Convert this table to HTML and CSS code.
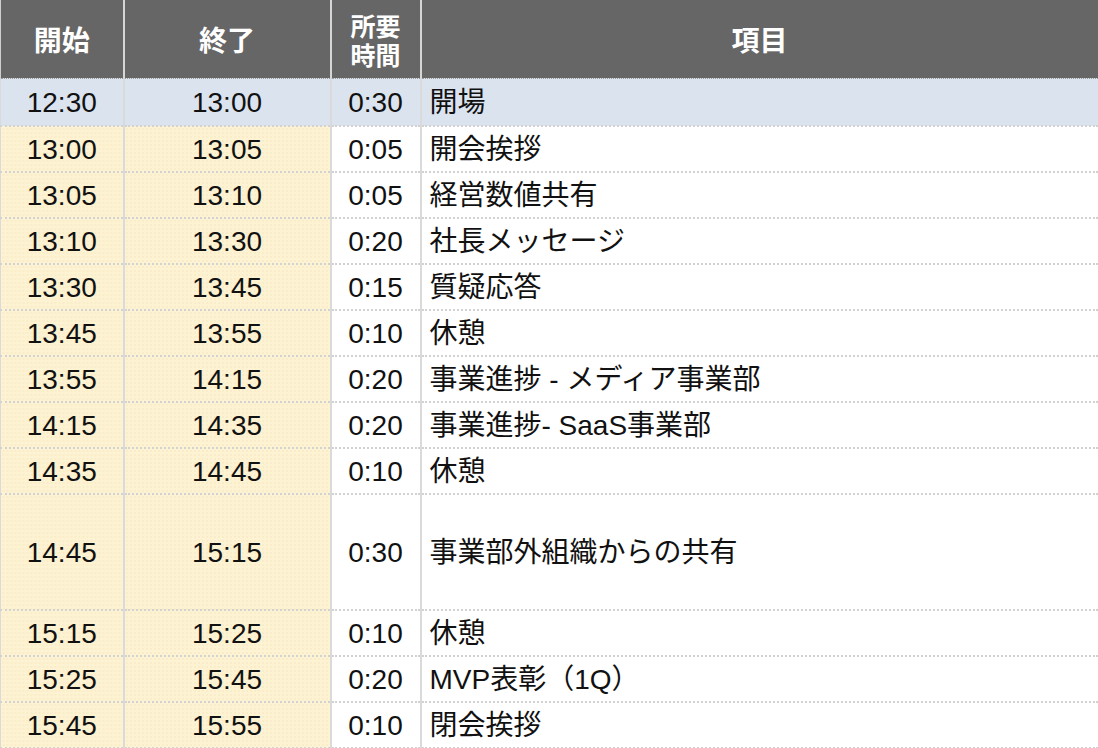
FILE: index.html
```html
<!DOCTYPE html>
<html lang="ja">
<head>
<meta charset="utf-8">
<title>スケジュール</title>
<link rel="stylesheet" href="styles.css">
</head>
<body>
<table class="schedule">
  <colgroup>
    <col class="c-start">
    <col class="c-end">
    <col class="c-dur">
    <col class="c-item">
  </colgroup>
  <thead>
    <tr class="head">
      <th>開始</th>
      <th>終了</th>
      <th class="dur-head"><span class="dl">所要</span><span class="dl">時間</span></th>
      <th>項目</th>
    </tr>
  </thead>
  <tbody>
    <tr class="first"><td class="t">12:30</td><td class="t">13:00</td><td class="d">0:30</td><td class="i">開場</td></tr>
    <tr><td class="t y">13:00</td><td class="t y">13:05</td><td class="d">0:05</td><td class="i">開会挨拶</td></tr>
    <tr><td class="t y">13:05</td><td class="t y">13:10</td><td class="d">0:05</td><td class="i">経営数値共有</td></tr>
    <tr><td class="t y">13:10</td><td class="t y">13:30</td><td class="d">0:20</td><td class="i">社長メッセージ</td></tr>
    <tr><td class="t y">13:30</td><td class="t y">13:45</td><td class="d">0:15</td><td class="i">質疑応答</td></tr>
    <tr><td class="t y">13:45</td><td class="t y">13:55</td><td class="d">0:10</td><td class="i">休憩</td></tr>
    <tr><td class="t y">13:55</td><td class="t y">14:15</td><td class="d">0:20</td><td class="i">事業進捗 - メディア事業部</td></tr>
    <tr><td class="t y">14:15</td><td class="t y">14:35</td><td class="d">0:20</td><td class="i">事業進捗- SaaS事業部</td></tr>
    <tr><td class="t y">14:35</td><td class="t y">14:45</td><td class="d">0:10</td><td class="i">休憩</td></tr>
    <tr class="tall"><td class="t y">14:45</td><td class="t y">15:15</td><td class="d">0:30</td><td class="i">事業部外組織からの共有</td></tr>
    <tr><td class="t y">15:15</td><td class="t y">15:25</td><td class="d">0:10</td><td class="i">休憩</td></tr>
    <tr><td class="t y">15:25</td><td class="t y">15:45</td><td class="d">0:20</td><td class="i">MVP表彰（1Q）</td></tr>
    <tr><td class="t y">15:45</td><td class="t y">15:55</td><td class="d">0:10</td><td class="i">閉会挨拶</td></tr>
  </tbody>
</table>
</body>
</html>
```

FILE: styles.css
```css
html, body {
  margin: 0;
  padding: 0;
  background: #ffffff;
}

.schedule {
  width: 1098px;
  table-layout: fixed;
  border-collapse: collapse;
  font-family: "Liberation Sans", "Noto Sans CJK JP", Arial, sans-serif;
  font-size: 28px;
  color: #111111;
}

.c-start { width: 123px; }
.c-end { width: 207px; }
.c-dur { width: 90px; }
.c-item { width: 678px; }

.head {
  height: 78px;
}

.head th {
  background: #666666;
  color: #ffffff;
  font-weight: bold;
  font-size: 28px;
  line-height: 32px;
  text-align: center;
  padding: 0;
  border-left: 2px solid #d6d6d6;
  border-right: 2px solid #d6d6d6;
  border-bottom: 1px dotted #9a9a9a;
  font-family: "Noto Sans CJK JP", sans-serif;
}

.head th:first-child {
  border-left: 1px solid #cfcfcf;
}

.head th.dur-head {
  font-size: 25px;
  line-height: 29px;
  padding-top: 2px;
}

.dl {
  display: block;
  height: 29px;
}

tbody tr {
  height: 46px;
}

tbody tr.first {
  height: 48px;
}

tbody tr.tall {
  height: 116px;
}

tbody td {
  padding: 0;
  padding-top: 2px;
  border-bottom: 2px dotted #d2d2d2;
  border-left: 2px solid #dadada;
  border-right: 2px solid #dadada;
  vertical-align: middle;
  white-space: nowrap;
  line-height: 32px;
}

tbody td:first-child {
  border-left: 1px solid #dadada;
}

.t {
  text-align: center;
}

.d {
  text-align: center;
}

.i {
  text-align: left;
  padding-left: 8px;
}

.y {
  background-color: #fdf2d2;
  background-image: radial-gradient(circle, #f6eac6 0.6px, rgba(0,0,0,0) 0.9px);
  background-size: 4px 4px;
}

tr.first td {
  background: #dbe3ef;
}
```
